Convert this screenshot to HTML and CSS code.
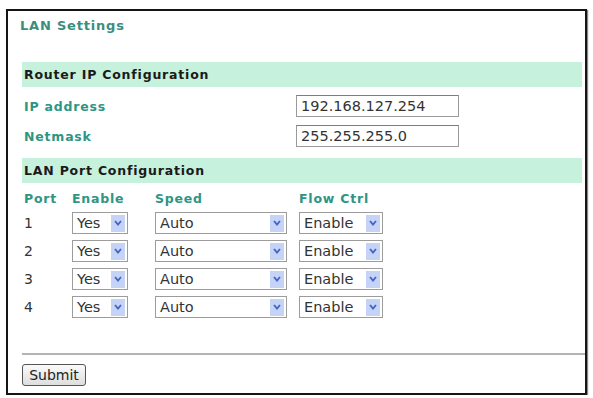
FILE: index.html
```html
<!DOCTYPE html>
<html lang="en">
<head>
    <meta charset="UTF-8">
    <title>LAN Settings</title>
    <link rel="stylesheet" href="styles.css">
</head>
<body>
    <div class="panel">
        <div class="title">LAN Settings</div>

        <div class="bar">Router IP Configuration</div>
        <div class="field-row">
            <div class="label">IP address</div>
            <div class="text-input">192.168.127.254</div>
        </div>
        <div class="field-row">
            <div class="label">Netmask</div>
            <div class="text-input">255.255.255.0</div>
        </div>

        <div class="bar bar-second">LAN Port Configuration</div>
        <div class="port-grid">
            <div class="label head">Port</div>
            <div class="label head">Enable</div>
            <div class="label head">Speed</div>
            <div class="label head">Flow Ctrl</div>

            <div class="num">1</div>
            <div class="select sel-enable"><span class="value">Yes</span><span class="arrow"><svg width="8" height="6" viewBox="0 0 8 6"><path d="M1 1 L4 4.5 L7 1" fill="none" stroke="#3f63c8" stroke-width="1.8"/></svg></span></div>
            <div class="select sel-speed"><span class="value">Auto</span><span class="arrow"><svg width="8" height="6" viewBox="0 0 8 6"><path d="M1 1 L4 4.5 L7 1" fill="none" stroke="#3f63c8" stroke-width="1.8"/></svg></span></div>
            <div class="select sel-flow"><span class="value">Enable</span><span class="arrow"><svg width="8" height="6" viewBox="0 0 8 6"><path d="M1 1 L4 4.5 L7 1" fill="none" stroke="#3f63c8" stroke-width="1.8"/></svg></span></div>

            <div class="num">2</div>
            <div class="select sel-enable"><span class="value">Yes</span><span class="arrow"><svg width="8" height="6" viewBox="0 0 8 6"><path d="M1 1 L4 4.5 L7 1" fill="none" stroke="#3f63c8" stroke-width="1.8"/></svg></span></div>
            <div class="select sel-speed"><span class="value">Auto</span><span class="arrow"><svg width="8" height="6" viewBox="0 0 8 6"><path d="M1 1 L4 4.5 L7 1" fill="none" stroke="#3f63c8" stroke-width="1.8"/></svg></span></div>
            <div class="select sel-flow"><span class="value">Enable</span><span class="arrow"><svg width="8" height="6" viewBox="0 0 8 6"><path d="M1 1 L4 4.5 L7 1" fill="none" stroke="#3f63c8" stroke-width="1.8"/></svg></span></div>

            <div class="num">3</div>
            <div class="select sel-enable"><span class="value">Yes</span><span class="arrow"><svg width="8" height="6" viewBox="0 0 8 6"><path d="M1 1 L4 4.5 L7 1" fill="none" stroke="#3f63c8" stroke-width="1.8"/></svg></span></div>
            <div class="select sel-speed"><span class="value">Auto</span><span class="arrow"><svg width="8" height="6" viewBox="0 0 8 6"><path d="M1 1 L4 4.5 L7 1" fill="none" stroke="#3f63c8" stroke-width="1.8"/></svg></span></div>
            <div class="select sel-flow"><span class="value">Enable</span><span class="arrow"><svg width="8" height="6" viewBox="0 0 8 6"><path d="M1 1 L4 4.5 L7 1" fill="none" stroke="#3f63c8" stroke-width="1.8"/></svg></span></div>

            <div class="num">4</div>
            <div class="select sel-enable"><span class="value">Yes</span><span class="arrow"><svg width="8" height="6" viewBox="0 0 8 6"><path d="M1 1 L4 4.5 L7 1" fill="none" stroke="#3f63c8" stroke-width="1.8"/></svg></span></div>
            <div class="select sel-speed"><span class="value">Auto</span><span class="arrow"><svg width="8" height="6" viewBox="0 0 8 6"><path d="M1 1 L4 4.5 L7 1" fill="none" stroke="#3f63c8" stroke-width="1.8"/></svg></span></div>
            <div class="select sel-flow"><span class="value">Enable</span><span class="arrow"><svg width="8" height="6" viewBox="0 0 8 6"><path d="M1 1 L4 4.5 L7 1" fill="none" stroke="#3f63c8" stroke-width="1.8"/></svg></span></div>
        </div>

        <div class="divider"></div>
        <button class="submit-btn">Submit</button>
    </div>
</body>
</html>
```

FILE: styles.css
```css
body {
    margin: 0;
    background: #fff;
    font-family: 'DejaVu Sans', Verdana, sans-serif;
    color: #222;
}

.panel {
    box-sizing: border-box;
    height: 386px;
    margin: 9px 6px 0 6px;
    padding: 7px 3px 0 14px;
    border: 2px solid #151515;
    box-shadow: 1px 1px 1px #888;
}

.title {
    margin-left: -2px;
    height: 16px;
    line-height: 16px;
    font-size: 13px;
    font-weight: bold;
    letter-spacing: 0.8px;
    color: #3a8e7e;
}

.bar {
    margin-top: 28px;
    height: 25px;
    line-height: 25px;
    padding-left: 2px;
    background: #c6f1dc;
    font-size: 12.5px;
    font-weight: bold;
    letter-spacing: 0.8px;
    color: #1a1a1a;
}

.bar-second {
    margin-top: 11px;
}

.label {
    font-size: 12.5px;
    font-weight: bold;
    letter-spacing: 0.8px;
    color: #2e9584;
}

.field-row {
    display: grid;
    grid-template-columns: 272px 163px;
    align-items: center;
    margin-top: 8px;
    padding-left: 2px;
}

.text-input {
    box-sizing: border-box;
    height: 22px;
    line-height: 20px;
    padding-left: 4px;
    border: 1px solid #9a9a9a;
    border-top-color: #7d7d7d;
    font-size: 14.5px;
    color: #333;
}

.port-grid {
    display: grid;
    grid-template-columns: 50px 83px 144px 1fr;
    grid-template-rows: 15px repeat(4, 22px);
    row-gap: 6px;
    align-items: center;
    margin-top: 8px;
}

.port-grid .head:first-child {
    padding-left: 2px;
}

.num {
    padding-left: 2px;
    font-size: 14px;
    color: #333;
}

.select {
    box-sizing: border-box;
    display: flex;
    align-items: center;
    height: 22px;
    border: 1px solid #9c9c9c;
    background: #fff;
    font-size: 14.5px;
    color: #333;
}

.select .value {
    flex: 1;
    padding-left: 4px;
}

.select .arrow {
    display: flex;
    align-items: center;
    justify-content: center;
    width: 14px;
    height: 17px;
    margin-right: 2px;
    background: #c4d3f6;
}

.sel-enable {
    width: 56px;
}

.sel-speed {
    width: 132px;
}

.sel-flow {
    width: 84px;
}

.divider {
    margin-top: 35px;
    margin-right: -3px;
    height: 2px;
    background: #b4b4b4;
}

.submit-btn {
    margin-top: 9px;
    width: 64px;
    height: 22px;
    padding: 0;
    border: 1px solid #555;
    border-radius: 3px;
    background: linear-gradient(#fafafa, #dedede);
    font-family: 'DejaVu Sans', Verdana, sans-serif;
    font-size: 14px;
    color: #222;
}
```
